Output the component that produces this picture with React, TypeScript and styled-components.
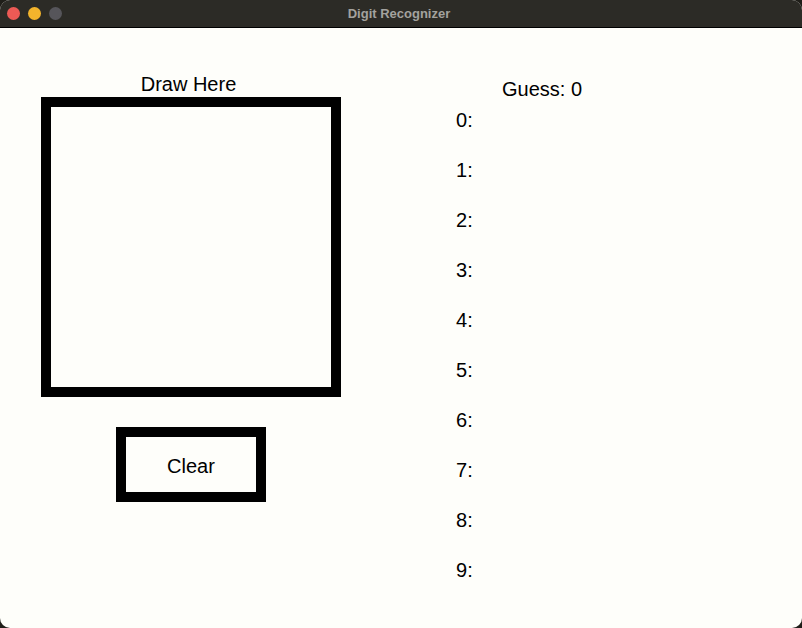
import styled, { createGlobalStyle } from "styled-components";

const GlobalStyle = createGlobalStyle`
  html, body {
    margin: 0;
    padding: 0;
    background: #1f1e19;
  }
`;

const digits = [0, 1, 2, 3, 4, 5, 6, 7, 8, 9];

const App = () => {
  return (
    <>
      <GlobalStyle />
      <Window>
        <TitleBar>
          <Lights>
            <Light color="#ec5a55" />
            <Light color="#f3b42c" />
            <Light color="#56555a" />
          </Lights>
          <Title>Digit Recognizer</Title>
        </TitleBar>
        <Content>
          <DrawColumn>
            <Label>Draw Here</Label>
            <Canvas />
            <ClearButton>Clear</ClearButton>
          </DrawColumn>
          <ResultColumn>
            <Guess>Guess: 0</Guess>
            <DigitList>
              {digits.map((d) => (
                <DigitRow key={d}>{d}:</DigitRow>
              ))}
            </DigitList>
          </ResultColumn>
        </Content>
      </Window>
    </>
  );
};

const Window = styled.div`
  width: 802px;
  height: 628px;
  border-radius: 10px;
  overflow: hidden;
  background: #fefefa;
  display: flex;
  flex-direction: column;
  font-family: "Liberation Sans", Arial, sans-serif;
  color: #000;
`;

const TitleBar = styled.div`
  position: relative;
  height: 27px;
  flex-shrink: 0;
  background: #2c2b26;
  border-bottom: 1px solid #000;
  display: flex;
  align-items: center;
  justify-content: center;
`;

const Lights = styled.div`
  position: absolute;
  left: 7px;
  top: 7px;
  display: flex;
  gap: 8px;
`;

const Light = styled.span<{ color: string }>`
  width: 13px;
  height: 13px;
  border-radius: 50%;
  background: ${(props) => props.color};
`;

const Title = styled.div`
  font-size: 13px;
  font-weight: bold;
  color: #a3a29e;
  margin-left: -4px;
`;

const Content = styled.div`
  flex: 1;
  display: flex;
  padding-left: 41px;
  gap: 115px;
`;

const DrawColumn = styled.div`
  width: 300px;
  padding-top: 45px;
  display: flex;
  flex-direction: column;
  align-items: center;
`;

const Label = styled.div`
  font-size: 20px;
  line-height: 23px;
  margin-left: -5px;
`;

const Canvas = styled.div`
  box-sizing: border-box;
  width: 300px;
  height: 300px;
  margin-top: 1px;
  border: 10px solid #000;
  background: #fefefa;
`;

const ClearButton = styled.div`
  box-sizing: border-box;
  width: 150px;
  height: 75px;
  margin-top: 30px;
  padding-top: 3px;
  border: 10px solid #000;
  display: flex;
  align-items: center;
  justify-content: center;
  font-size: 20px;
`;

const ResultColumn = styled.div`
  padding-top: 50px;
  display: flex;
  flex-direction: column;
`;

const Guess = styled.div`
  font-size: 20px;
  line-height: 23px;
  padding-left: 46px;
`;

const DigitList = styled.div`
  margin-top: 8px;
  display: flex;
  flex-direction: column;
  gap: 27px;
`;

const DigitRow = styled.div`
  font-size: 20px;
  line-height: 23px;
`;

export default App;
